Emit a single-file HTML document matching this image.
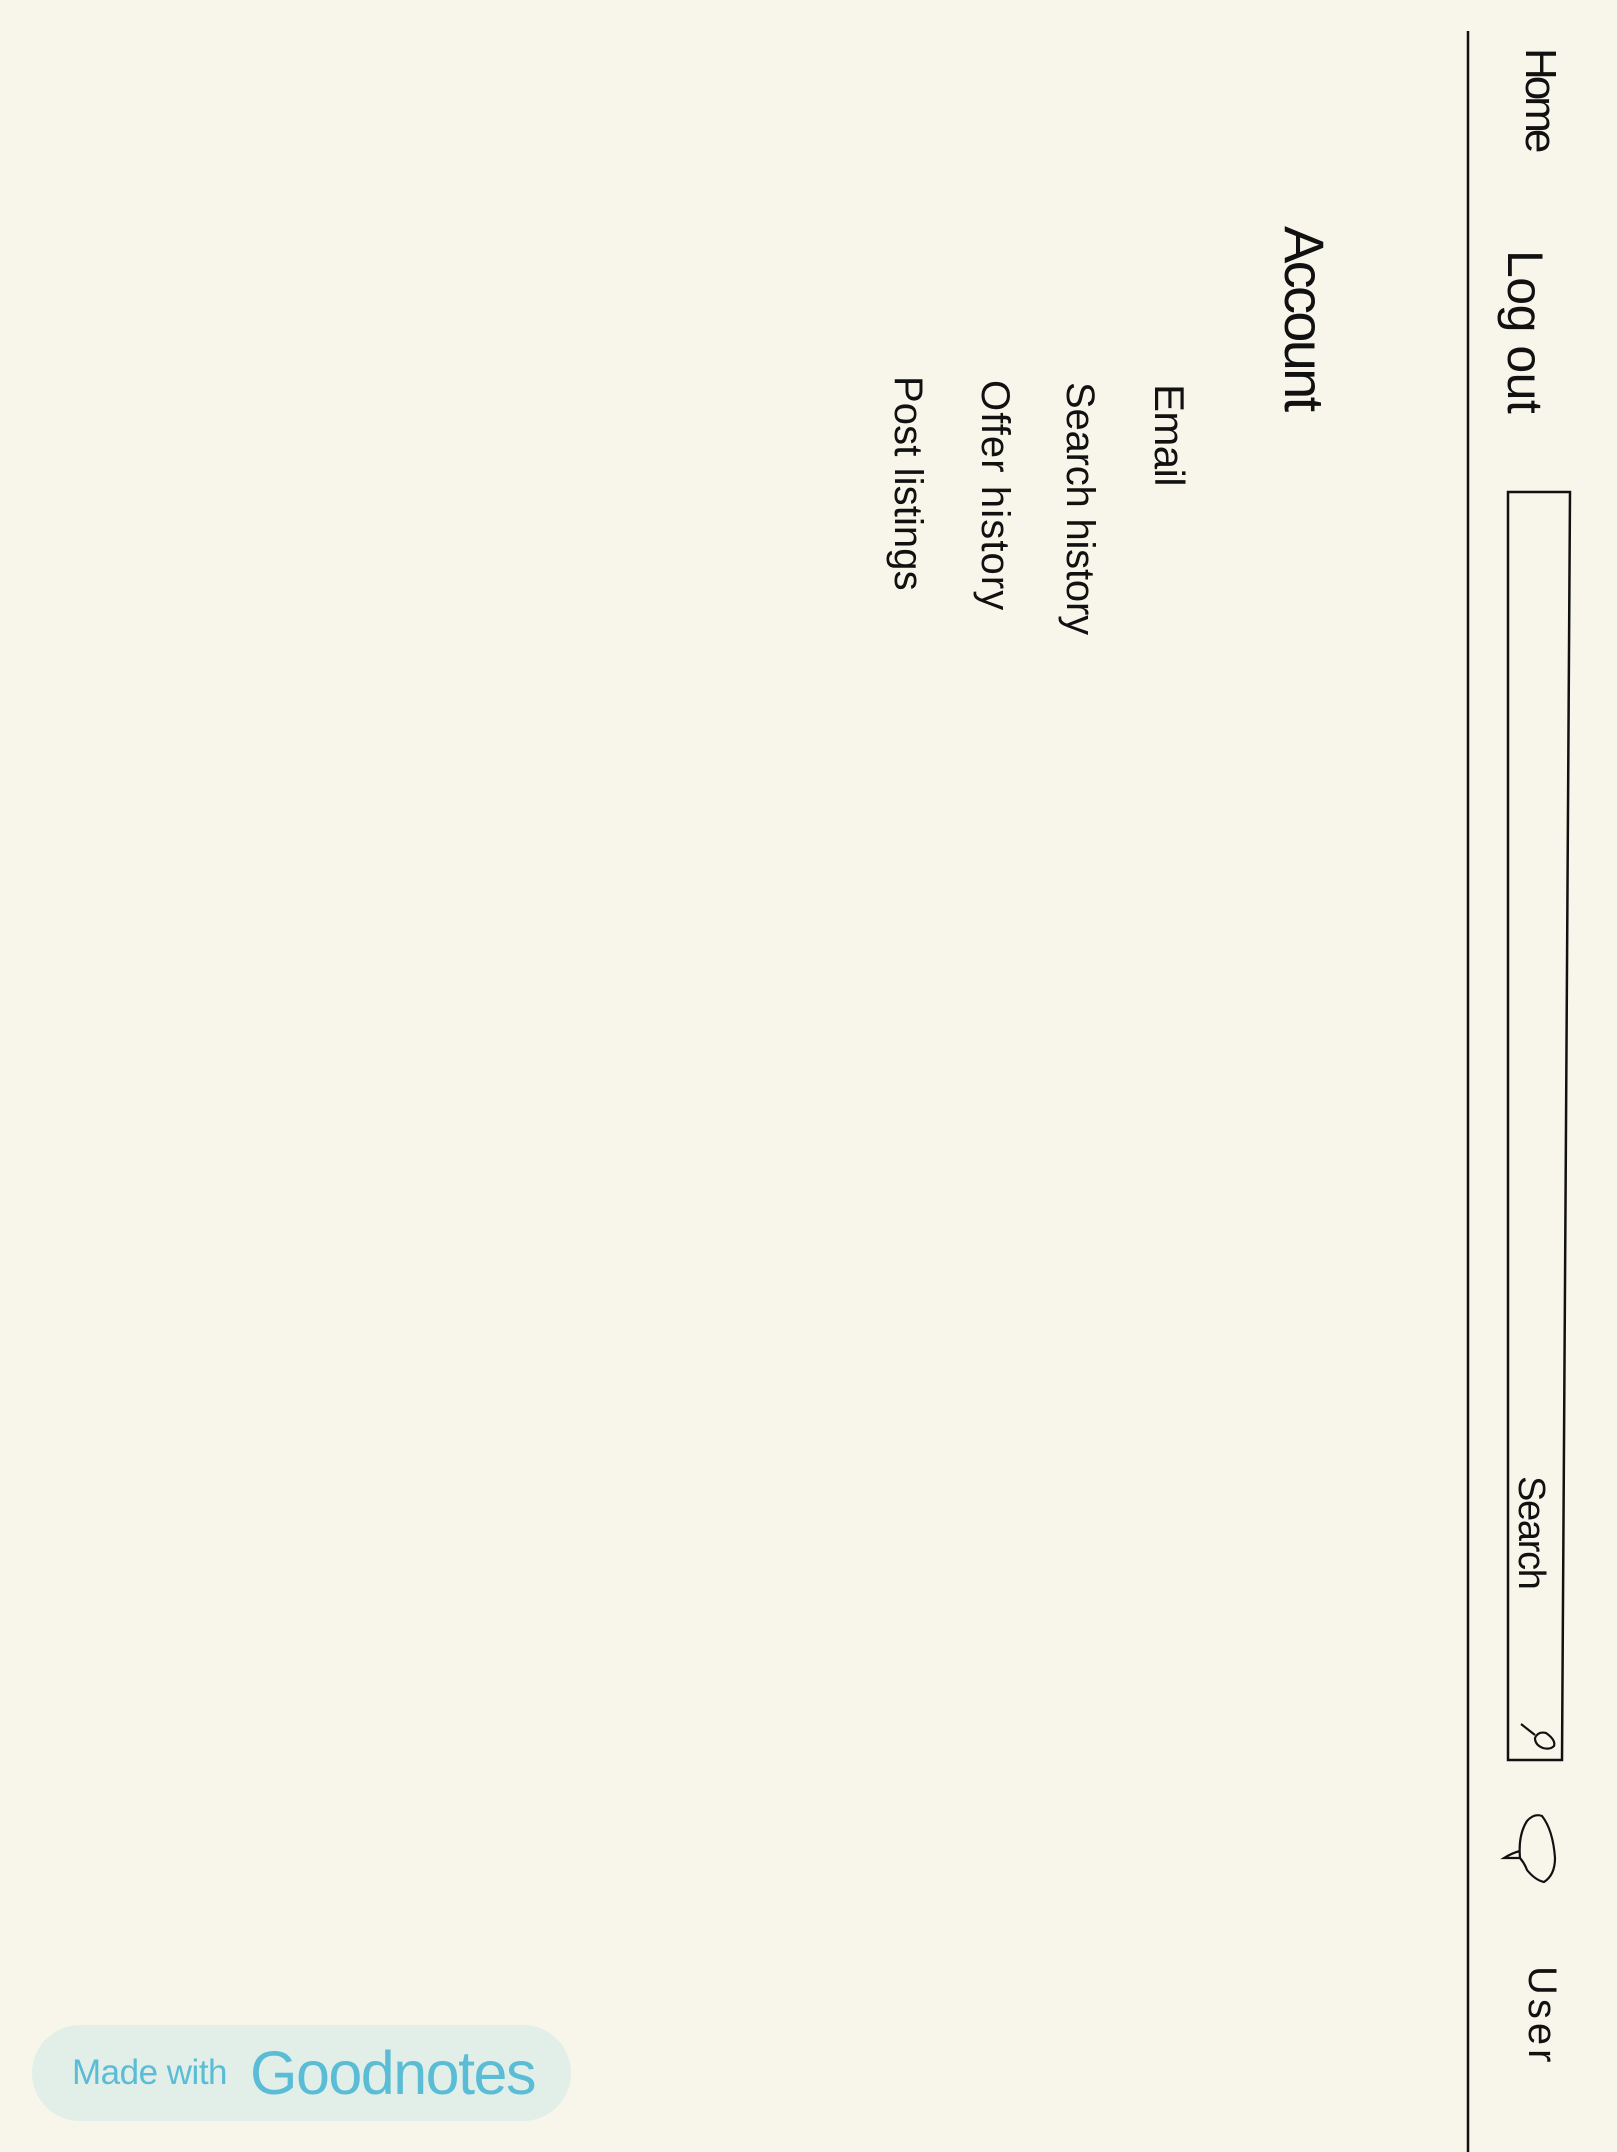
<!DOCTYPE html>
<html><head><meta charset="utf-8">
<style>
html,body{margin:0;padding:0}
body{width:1617px;height:2152px;background:#f8f6eb;position:relative;overflow:hidden;font-family:"Liberation Sans",sans-serif;color:#111}
.v{position:absolute;writing-mode:vertical-rl;white-space:nowrap;font-weight:normal;line-height:1}
.badge{position:absolute;left:32px;top:2025px;width:539px;height:96px;border-radius:48px;background:#e1efe8;color:#5bbcd6}
.badge .a{position:absolute;left:40px;top:28px;font-size:35px;letter-spacing:-0.5px}
.badge .b{position:absolute;left:218px;top:13px;font-size:61px;letter-spacing:-1.5px}
</style></head><body>
<svg width="1617" height="2152" style="position:absolute;left:0;top:0">
<line x1="1468" y1="31" x2="1468" y2="2152" stroke="#111" stroke-width="2.5"/>
<path d="M1508 492 L1570 492 L1562 1760 L1508 1760 Z" fill="none" stroke="#111" stroke-width="2.5"/>
<path d="M1521 1724 L1535 1735" stroke="#111" stroke-width="2.2" fill="none"/>
<path d="M1535 1738 Q1538 1731 1546 1733 Q1556 1740 1554 1746 Q1550 1750 1543 1748 Q1535 1745 1535 1738 Z" stroke="#111" stroke-width="2.2" fill="none"/>
<path d="M1520 1858 Q1518 1835 1527 1821 Q1534 1813 1542 1816 Q1553 1830 1555 1858 Q1555 1875 1544 1882 Q1535 1880 1527 1870 Q1525 1864 1520 1858 L1504 1858 Q1512 1853 1520 1851" stroke="#111" stroke-width="2.2" fill="none"/>
</svg>
<div class="v" style="left:1518px;top:48px;font-size:44px;letter-spacing:-4px">Home</div>
<div class="v" style="left:1500px;top:250px;font-size:50px;letter-spacing:-0.5px">Log out</div>
<div class="v" style="left:1276px;top:226px;font-size:56px;letter-spacing:-2.7px">Account</div>
<div class="v" style="left:1148px;top:384px;font-size:42px;letter-spacing:-0.6px">Email</div>
<div class="v" style="left:1060px;top:382px;font-size:40px;letter-spacing:-0.2px">Search history</div>
<div class="v" style="left:975px;top:380px;font-size:40px;letter-spacing:1.1px">Offer history</div>
<div class="v" style="left:888px;top:376px;font-size:40px;letter-spacing:0.1px">Post listings</div>
<div class="v" style="left:1512px;top:1476px;font-size:38px;letter-spacing:-1.3px">Search</div>
<div class="v" style="left:1522px;top:1966px;font-size:40px;letter-spacing:4px">User</div>
<div class="badge"><span class="a">Made with</span><span class="b">Goodnotes</span></div>
</body></html>
